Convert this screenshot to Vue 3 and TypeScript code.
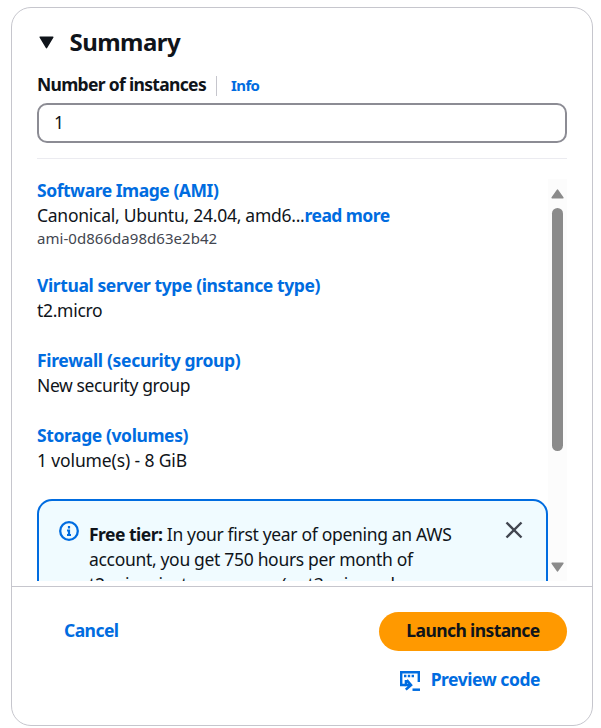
<script setup lang="ts">
import { ref } from 'vue'

interface SummaryItem {
  key: string
  title: string
  value: string
}

const instanceCount = ref('1')

const items: SummaryItem[] = [
  { key: 'server', title: 'Virtual server type (instance type)', value: 't2.micro' },
  { key: 'firewall', title: 'Firewall (security group)', value: 'New security group' },
  { key: 'storage', title: 'Storage (volumes)', value: '1 volume(s) - 8 GiB' },
]
</script>

<template>
  <section class="card">
    <div class="top">
      <header class="header">
        <svg class="caret" viewBox="0 0 16 13" width="16" height="13">
          <path d="M2.2 1.2h12.6L8.5 11.6z" fill="#0f141a" stroke="#0f141a" stroke-width="1.5" stroke-linejoin="round" />
        </svg>
        <h2 class="title">Summary</h2>
      </header>
      <div class="label-row">
        <label class="label" for="count">Number of instances</label>
        <span class="separator"></span>
        <a class="info">Info</a>
      </div>
      <input id="count" v-model="instanceCount" class="input" type="text" />
    </div>

    <div class="scroll-area">
      <div class="content">
        <div class="item">
          <a class="link ami-title">Software Image (AMI)</a>
          <div class="value"><span class="ami-value">Canonical, Ubuntu, 24.04, amd6...</span><a class="link read">read more</a></div>
          <div class="ami-id">ami-0d866da98d63e2b42</div>
        </div>
        <div v-for="item in items" :key="item.key" class="item" :class="item.key">
          <a class="link">{{ item.title }}</a>
          <div class="value">{{ item.value }}</div>
        </div>
        <div class="alert">
          <svg class="info-icon" viewBox="0 0 20 20" width="20" height="20" fill="none" stroke="#006ce0">
            <circle cx="10" cy="10" r="8.8" stroke-width="2.3" />
            <path d="M10 5v2.5M8 9.5h2V14M8 14h4" stroke-width="2.2" />
          </svg>
          <div class="alert-text">
            <div><b>Free tier:</b> In your first year of opening an AWS</div>
            <div>account, you get 750 hours per month of</div>
            <div>t2.micro instance usage (or t3.micro where</div>
          </div>
          <svg class="close" viewBox="0 0 18 18" width="18" height="18">
            <path d="M1.5 1.5l15 15M16.5 1.5l-15 15" stroke="#424650" stroke-width="2.4" />
          </svg>
        </div>
      </div>
      <div class="scrollbar">
        <svg viewBox="0 0 13 10" width="13" height="10">
          <path d="M6.5 1.2L11.8 8.8H1.2z" fill="#8b8b8b" stroke="#8b8b8b" stroke-width="1.6" stroke-linejoin="round" />
        </svg>
        <div class="thumb"></div>
        <svg class="down" viewBox="0 0 13 10" width="13" height="10">
          <path d="M6.5 8.8L11.8 1.2H1.2z" fill="#8b8b8b" stroke="#8b8b8b" stroke-width="1.6" stroke-linejoin="round" />
        </svg>
      </div>
    </div>

    <footer class="footer">
      <a class="cancel">Cancel</a>
      <div class="actions">
        <button class="launch" type="button">Launch instance</button>
        <a class="preview">
          <svg viewBox="0 0 20 20" width="20" height="20" fill="none" stroke="#006ce0">
            <path d="M5.5 14H1.2V1.2h17.6V11" stroke-width="2.4" />
            <path d="M4 5h2.4M7.8 5h2.4M11.6 5H14" stroke-width="2.4" />
            <path d="M6 9v5h5M6.8 9l4.2 5-5.2 4.6" stroke-width="2.6" />
            <path d="M12.5 18.7H20" stroke-width="2.5" />
          </svg>
          <span>Preview code</span>
        </a>
      </div>
    </footer>
  </section>
</template>

<style>
body {
  background: #fff;
}
</style>

<style scoped>
* {
  box-sizing: border-box;
}
.card {
  width: 582px;
  height: 719px;
  margin: 7px 0 0 11px;
  border: 1px solid #c6c6cd;
  border-radius: 20px;
  display: flex;
  flex-direction: column;
  overflow: hidden;
  font-family: 'Noto Sans', 'Open Sans', sans-serif;
  font-size: 17.5px;
  line-height: 25px;
  color: #0f141a;
  white-space: nowrap;
}
.top {
  margin: 0 25px;
  height: 151px;
  border-bottom: 1px solid #ebebf0;
  flex: none;
}
.header {
  display: flex;
  align-items: center;
  height: 30px;
  margin-top: 19px;
  padding-left: 1px;
}
.title {
  margin: 0 0 0 15.5px;
  font-size: 24px;
  line-height: 30px;
  font-weight: 700;
  letter-spacing: -0.55px;
}
.label-row {
  display: flex;
  align-items: center;
  height: 25px;
  margin-top: 15px;
}
.label {
  font-weight: 700;
  letter-spacing: -0.68px;
}
.separator {
  width: 1px;
  height: 20px;
  margin: 2px 14px 0 10px;
  background: #c6c6cd;
}
.info {
  margin-top: 2px;
  font-size: 15px;
  font-weight: 700;
  color: #006ce0;
  letter-spacing: -0.6px;
}
.input {
  display: block;
  width: 530px;
  height: 40px;
  margin-top: 6px;
  padding: 0 15px 2px;
  border: 2px solid #8c8c94;
  border-radius: 10px;
  background: #fff;
  color: #0f141a;
  font: inherit;
  outline: none;
}
.scroll-area {
  display: flex;
  height: 402px;
  margin: 20px 25px 5px;
  flex: none;
  overflow: hidden;
}
.content {
  width: 511px;
  margin-top: -1px;
}
.item {
  margin-bottom: 25px;
}
.link {
  color: #006ce0;
  font-weight: 700;
  letter-spacing: -0.4px;
}
.ami-title {
  letter-spacing: -0.46px;
}
.ami-value {
  letter-spacing: -0.26px;
}
.read {
  letter-spacing: -0.55px;
}
.value {
  letter-spacing: -0.3px;
}
.firewall .link {
  letter-spacing: -0.32px;
}
.firewall .value {
  letter-spacing: -0.38px;
}
.storage .value {
  letter-spacing: -0.13px;
}
.ami-id {
  font-size: 15px;
  line-height: 20px;
  color: #424650;
  letter-spacing: 0.04px;
}
.alert {
  display: flex;
  height: 160px;
  margin-top: 26px;
  border: 2px solid #006ce0;
  border-radius: 15px;
  background: #f0fbff;
  padding: 20px 23px 0 20px;
}
.info-icon {
  flex: none;
}
.alert-text {
  flex: 1;
  margin: 1px 0 0 10px;
  letter-spacing: -0.32px;
}
.alert-text b {
  letter-spacing: -0.5px;
}
.close {
  flex: none;
}
.scrollbar {
  width: 19px;
  height: 402px;
  padding: 10px 0 9px;
  display: flex;
  flex-direction: column;
  align-items: center;
  background: #fcfcfc;
}
.thumb {
  width: 11px;
  height: 243px;
  margin-top: 9px;
  border-radius: 6px;
  background: #8b8b8b;
}
.down {
  margin-top: auto;
}
.footer {
  flex: 1;
  display: flex;
  justify-content: space-between;
  border-top: 1px solid #c6c6cd;
  padding: 25px 25px 0 52px;
  font-weight: 700;
}
.cancel {
  height: 39px;
  line-height: 36px;
  color: #006ce0;
  letter-spacing: -0.55px;
}
.actions {
  display: flex;
  flex-direction: column;
  align-items: flex-end;
}
.launch {
  width: 188px;
  height: 39px;
  padding: 0 0 2px;
  border: 0;
  border-radius: 20px;
  background: #ff9900;
  color: #0f141a;
  font: inherit;
  letter-spacing: -0.6px;
}
.preview {
  display: flex;
  align-items: flex-end;
  height: 25px;
  margin: 16px 27px 0 0;
  color: #006ce0;
  letter-spacing: -0.45px;
}
.preview svg {
  margin-bottom: 1px;
}
.preview span {
  margin-left: 11px;
}
</style>
